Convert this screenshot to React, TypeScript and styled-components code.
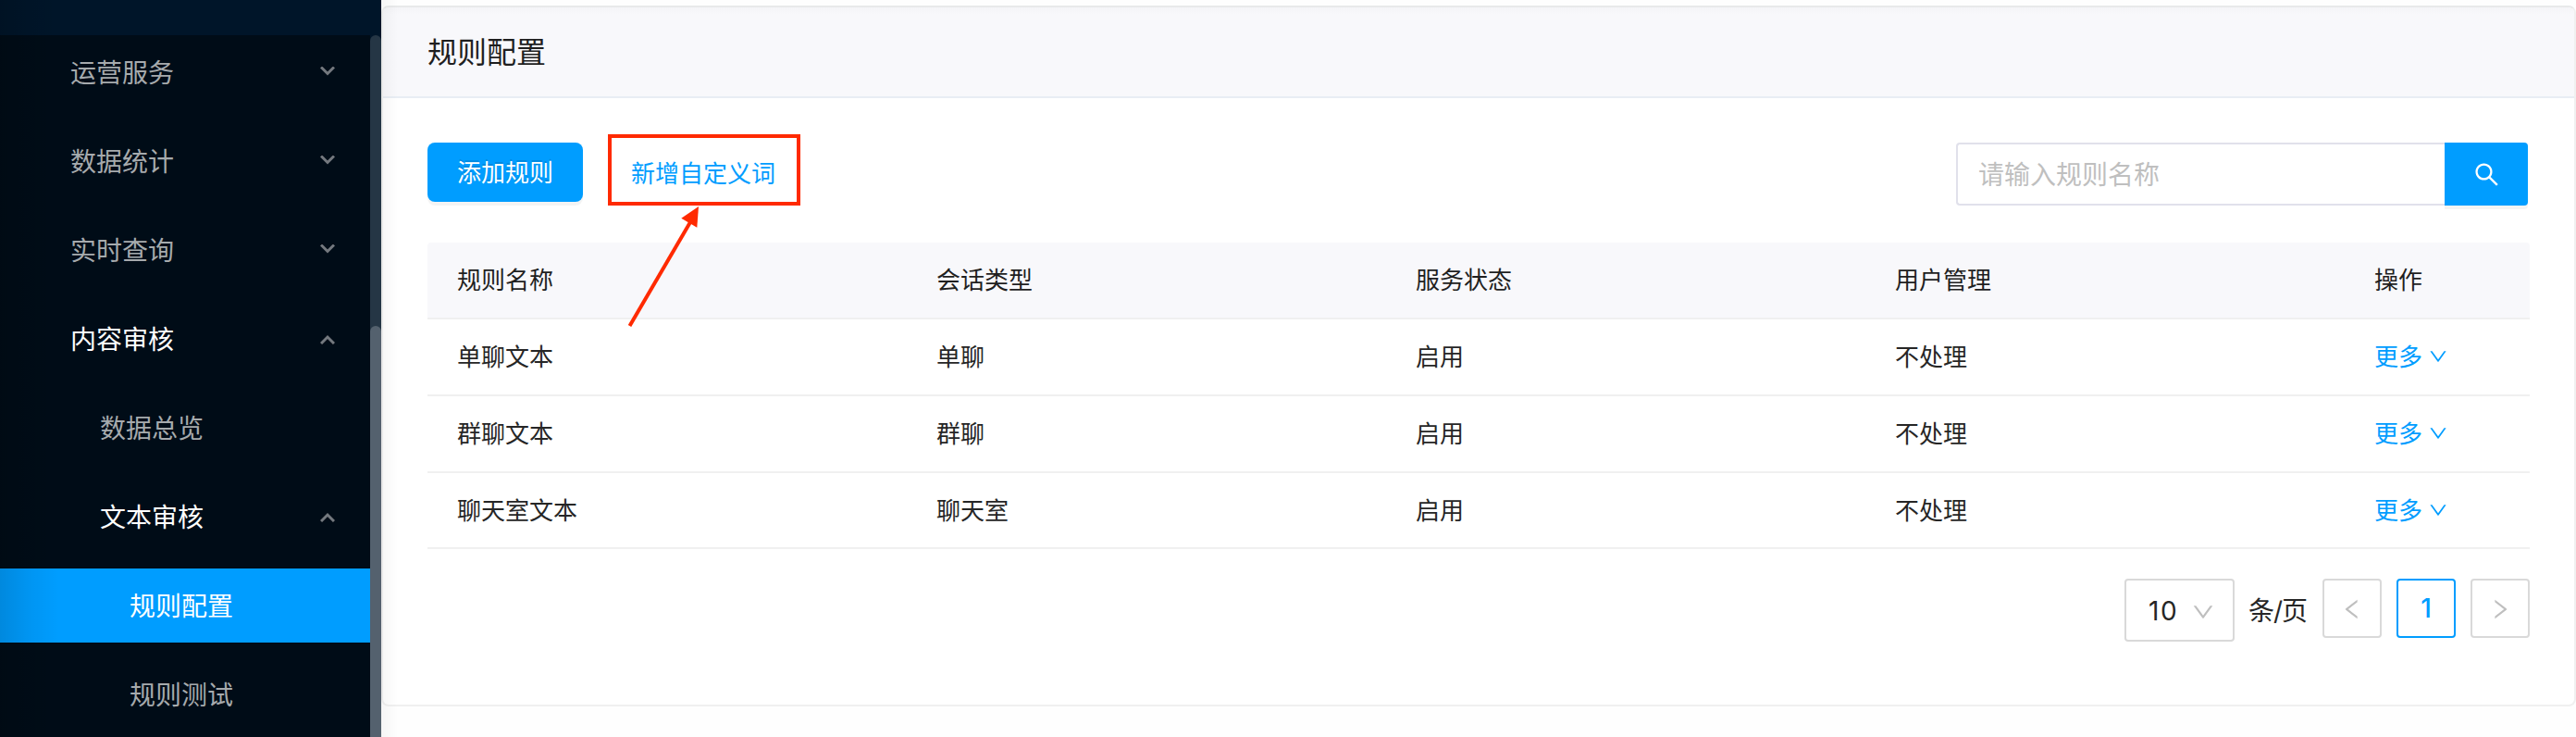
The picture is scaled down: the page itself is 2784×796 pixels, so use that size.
import React from 'react';
import styled, { createGlobalStyle } from 'styled-components';

const BLUE = '#009dff';
const RED = '#ff2a00';

const GlobalStyle = createGlobalStyle`
  *, *::before, *::after { box-sizing: border-box; }
  html, body { margin: 0; padding: 0; background: #fff; }
  body {
    font-family: Inter, "Noto Sans CJK SC", sans-serif;
    font-size: 26px;
    color: #262626;
  }
`;

const Page = styled.div`
  display: flex;
  width: 2784px;
  height: 796px;
  overflow: hidden;
  background: #fefefe;
`;

/* ---------- sidebar ---------- */

const Sidebar = styled.aside`
  position: relative;
  flex: none;
  width: 412px;
  height: 796px;
  padding-top: 38px;
  background: #001529;
  display: flex;

  &::before {
    content: '';
    position: absolute;
    left: 0;
    top: 0;
    width: 64px;
    height: 100%;
    background: linear-gradient(90deg, rgba(0, 0, 0, 0.13), rgba(0, 0, 0, 0.05) 50%, rgba(0, 0, 0, 0));
  }
`;

const Menu = styled.nav`
  width: 400px;
  height: 758px;
  overflow: hidden;
  background: #000c17;
  display: flex;
  flex-direction: column;
  gap: 16px;
`;

const MenuItem = styled.div<{ $level: number; $tone: 'muted' | 'open' | 'selected' }>`
  flex: none;
  display: flex;
  align-items: center;
  justify-content: space-between;
  height: 80px;
  padding: 0 38px 0 ${(p) => 76 + p.$level * 32}px;
  font-size: 28px;
  color: ${(p) => (p.$tone === 'muted' ? '#a6aaad' : '#fff')};
  background: ${(p) => (p.$tone === 'selected' ? BLUE : 'transparent')};
`;

const MenuLabel = styled.span`
  padding-top: 2px;
  line-height: 78px;
`;

const ScrollTrack = styled.div`
  width: 12px;
  height: 758px;
  padding-top: 314px;
  border-radius: 6px 6px 0 0;
  background: #253645;
`;

const ScrollThumb = styled.div`
  height: 444px;
  border-radius: 6px 6px 0 0;
  background: #54616e;
`;

/* ---------- main card ---------- */

const Main = styled.main`
  position: relative;
  flex: 1;
  padding-top: 6px;

  &::after {
    content: '';
    position: absolute;
    left: 0;
    top: 0;
    width: 18px;
    height: 100%;
    background: linear-gradient(90deg, rgba(0, 0, 0, 0.035), rgba(0, 0, 0, 0));
  }
`;

const Card = styled.section`
  height: 757px;
  border: 2px solid #f0f0f0;
  border-top-color: #e8e9ea;
  border-radius: 8px;
  background: #fff;
  overflow: hidden;
`;

const CardHeader = styled.header`
  display: flex;
  align-items: center;
  height: 98px;
  padding: 0 0 4px 48px;
  background: linear-gradient(#f4f4f7, #f8f8fb 8px);
  border-bottom: 2px solid #e8edf4;
`;

const Title = styled.h1`
  margin: 0;
  font-size: 32px;
  font-weight: 400;
  color: #1f1f1f;
`;

const CardBody = styled.div`
  padding: 48px 48px 0;
`;

const Toolbar = styled.div`
  display: flex;
  align-items: flex-start;
  height: 108px;
`;

const PrimaryButton = styled.button`
  flex: none;
  width: 168px;
  height: 64px;
  padding: 0 0 3px;
  border: 0;
  border-radius: 8px;
  background: ${BLUE};
  box-shadow: 0 4px 0 rgba(0, 0, 0, 0.045);
  color: #fff;
  font: inherit;
  text-shadow: 0 -2px 0 rgba(0, 0, 0, 0.12);
`;

const LinkButton = styled.a`
  position: relative;
  margin-left: 52px;
  line-height: 68px;
  color: ${BLUE};
`;

const Highlight = styled.span`
  position: absolute;
  left: -25px;
  top: -9px;
  width: 208px;
  height: 77px;
  border: 4px solid ${RED};
`;

const Arrow = styled.svg`
  position: absolute;
  left: -12px;
  top: 66px;
  overflow: visible;
`;

const SearchGroup = styled.div`
  display: flex;
  margin-left: auto;
  margin-right: 2px;
`;

const SearchInput = styled.input`
  width: 528px;
  height: 68px;
  padding: 1px 22px 0;
  border: 2px solid #e1e1eb;
  border-right: 0;
  border-radius: 4px 0 0 4px;
  outline: 0;
  font: inherit;
  font-size: 28px;
  background: #fff;

  &::placeholder {
    color: #bfbfbf;
    opacity: 1;
  }
`;

const SearchButton = styled.button`
  display: flex;
  align-items: center;
  justify-content: center;
  width: 90px;
  height: 68px;
  padding: 0;
  border: 0;
  border-radius: 0 4px 4px 0;
  background: ${BLUE};
  box-shadow: 0 4px 0 rgba(0, 0, 0, 0.045);
  color: #fff;
`;

/* ---------- table ---------- */

const Row = styled.div<{ $head?: boolean }>`
  display: grid;
  grid-template-columns: repeat(4, 518px) 1fr;
  height: 82.86px;
  border-bottom: 2px solid #f0f0f0;
  border-radius: ${(p) => (p.$head ? '4px 4px 0 0' : '0')};
  background: ${(p) => (p.$head ? '#f8f8fb' : '#fff')};
  color: ${(p) => (p.$head ? '#1f1f1f' : '#262626')};
`;

const Cell = styled.div`
  padding: 1px 0 0 32px;
  line-height: 80.86px;
`;

const MoreLink = styled.a`
  display: flex;
  align-items: center;
  gap: 7px;
  color: ${BLUE};

  svg {
    margin-bottom: 2px;
  }
`;

/* ---------- pagination ---------- */

const Pagination = styled.div`
  display: flex;
  justify-content: flex-end;
  align-items: flex-start;
  margin-top: 31.5px;
  font-size: 28px;
`;

const SizeSelect = styled.div`
  display: flex;
  align-items: center;
  justify-content: space-between;
  width: 119px;
  height: 68px;
  padding: 2px 20px 0 24px;
  border: 2px solid #d9d9d9;
  border-radius: 4px;
  color: #262626;
  letter-spacing: 1.5px;

  svg {
    margin-top: 2px;
  }
`;

const PerPage = styled.span`
  width: 64px;
  margin: 0 16px 0 15px;
  line-height: 70px;
  letter-spacing: -1px;
  white-space: nowrap;
`;

const PageButton = styled.button<{ $active?: boolean }>`
  display: flex;
  align-items: center;
  justify-content: center;
  width: 64px;
  height: 64px;
  padding: ${(p) => (p.$active ? '0' : '2px 0 0')};
  border: 2px solid ${(p) => (p.$active ? BLUE : '#d9d9d9')};
  border-radius: 4px;
  background: #fff;
  color: ${(p) => (p.$active ? BLUE : '#bfbfbf')};
  font: inherit;
  font-weight: ${(p) => (p.$active ? 500 : 400)};

  & + & {
    margin-left: 16px;
  }
`;

const Glyph = styled.svg<{ $tint?: string }>`
  flex: none;
  fill: ${(p) => p.$tint ?? 'currentColor'};
`;

const PATHS = {
  down: 'M884 256h-75c-5.1 0-9.9 2.5-12.9 6.6L512 654.2 227.9 262.6c-3-4.1-7.8-6.6-12.9-6.6h-75c-6.5 0-10.3 7.4-6.5 12.7l352.6 486.1c12.8 17.6 39 17.6 51.7 0l352.6-486.1c3.9-5.3.1-12.7-6.4-12.7z',
  left: 'M724 218.3V141c0-6.7-7.7-10.4-12.9-6.3L260.3 486.8a31.86 31.86 0 000 50.3l450.8 352.1c5.3 4.1 12.9.4 12.9-6.3v-77.3c0-4.9-2.3-9.6-6.1-12.6l-360-281 360-281.1c3.8-3 6.1-7.7 6.1-12.6z',
  right: 'M765.7 486.8L314.9 134.7A7.97 7.97 0 00302 141v77.3c0 4.9 2.3 9.6 6.1 12.6l360 281.1-360 281.1c-3.9 3-6.1 7.7-6.1 12.6V883c0 6.7 7.7 10.4 12.9 6.3l450.8-352.1a31.96 31.96 0 000-50.4z',
  search: 'M909.6 854.5L649.9 594.8C690.2 542.7 712 479 712 412c0-80.2-31.3-155.4-87.9-212.1-56.6-56.7-132-87.9-212.1-87.9s-155.5 31.3-212.1 87.9C143.2 256.5 112 331.8 112 412c0 80.1 31.3 155.5 87.9 212.1C256.5 680.8 331.8 712 412 712c67 0 130.6-21.8 182.7-62l259.7 259.6a8.2 8.2 0 0011.6 0l43.6-43.5a8.2 8.2 0 000-11.6zM570.4 570.4C528 612.7 471.8 636 412 636s-116-23.3-158.4-65.6C211.3 528 188 471.8 188 412s23.3-116.1 65.6-158.4C296 211.3 352.2 188 412 188s116.1 23.2 158.4 65.6S636 352.2 636 412s-23.3 116.1-65.6 158.4z',
};

function Icon({ name, size, tint }: { name: keyof typeof PATHS; size: number; tint?: string }) {
  return (
    <Glyph viewBox="64 64 896 896" width={size} height={size} $tint={tint}>
      <path d={PATHS[name]} />
    </Glyph>
  );
}

function MenuArrow({ open }: { open: boolean }) {
  return (
    <svg width="16" height="12" viewBox="0 0 16 12" fill="none" stroke="#74797f" strokeWidth="3">
      <path d={open ? 'M1 11L8 4L15 11' : 'M1 0.5L8 7.5L15 0.5'} />
    </svg>
  );
}

type Item = { label: string; level: number; tone?: 'open' | 'selected'; arrow?: 'up' | 'down' };

const MENU: Item[] = [
  { label: '运营服务', level: 0, arrow: 'down' },
  { label: '数据统计', level: 0, arrow: 'down' },
  { label: '实时查询', level: 0, arrow: 'down' },
  { label: '内容审核', level: 0, tone: 'open', arrow: 'up' },
  { label: '数据总览', level: 1 },
  { label: '文本审核', level: 1, tone: 'open', arrow: 'up' },
  { label: '规则配置', level: 2, tone: 'selected' },
  { label: '规则测试', level: 2 },
];

const COLUMNS = ['规则名称', '会话类型', '服务状态', '用户管理', '操作'];

const ROWS = [
  ['单聊文本', '单聊', '启用', '不处理'],
  ['群聊文本', '群聊', '启用', '不处理'],
  ['聊天室文本', '聊天室', '启用', '不处理'],
];

export default function App() {
  return (
    <>
      <GlobalStyle />
      <Page>
        <Sidebar>
          <Menu>
            {MENU.map((m) => (
              <MenuItem key={m.label} $level={m.level} $tone={m.tone ?? 'muted'}>
                <MenuLabel>{m.label}</MenuLabel>
                {m.arrow && <MenuArrow open={m.arrow === 'up'} />}
              </MenuItem>
            ))}
          </Menu>
          <ScrollTrack>
            <ScrollThumb />
          </ScrollTrack>
        </Sidebar>
        <Main>
          <Card>
            <CardHeader>
              <Title>规则配置</Title>
            </CardHeader>
            <CardBody>
              <Toolbar>
                <PrimaryButton>添加规则</PrimaryButton>
                <LinkButton>
                  新增自定义词
                  <Highlight />
                  <Arrow width="90" height="136" viewBox="0 0 90 136">
                    <path d="M10.5 132L76 20" stroke={RED} strokeWidth="4" />
                    <path d="M85 3L66.3 15.7L83.3 25.7Z" fill={RED} />
                  </Arrow>
                </LinkButton>
                <SearchGroup>
                  <SearchInput placeholder="请输入规则名称" />
                  <SearchButton aria-label="搜索">
                    <Icon name="search" size={27} />
                  </SearchButton>
                </SearchGroup>
              </Toolbar>
              <Row $head>
                {COLUMNS.map((c) => (
                  <Cell key={c}>{c}</Cell>
                ))}
              </Row>
              {ROWS.map((r) => (
                <Row key={r[0]}>
                  {r.map((c) => (
                    <Cell key={c}>{c}</Cell>
                  ))}
                  <Cell>
                    <MoreLink>
                      更多
                      <Icon name="down" size={20} />
                    </MoreLink>
                  </Cell>
                </Row>
              ))}
              <Pagination>
                <SizeSelect>
                  10
                  <Icon name="down" size={24} tint="#bfbfbf" />
                </SizeSelect>
                <PerPage>条/页</PerPage>
                <PageButton aria-label="上一页">
                  <Icon name="left" size={24} />
                </PageButton>
                <PageButton $active>1</PageButton>
                <PageButton aria-label="下一页">
                  <Icon name="right" size={24} />
                </PageButton>
              </Pagination>
            </CardBody>
          </Card>
        </Main>
      </Page>
    </>
  );
}
